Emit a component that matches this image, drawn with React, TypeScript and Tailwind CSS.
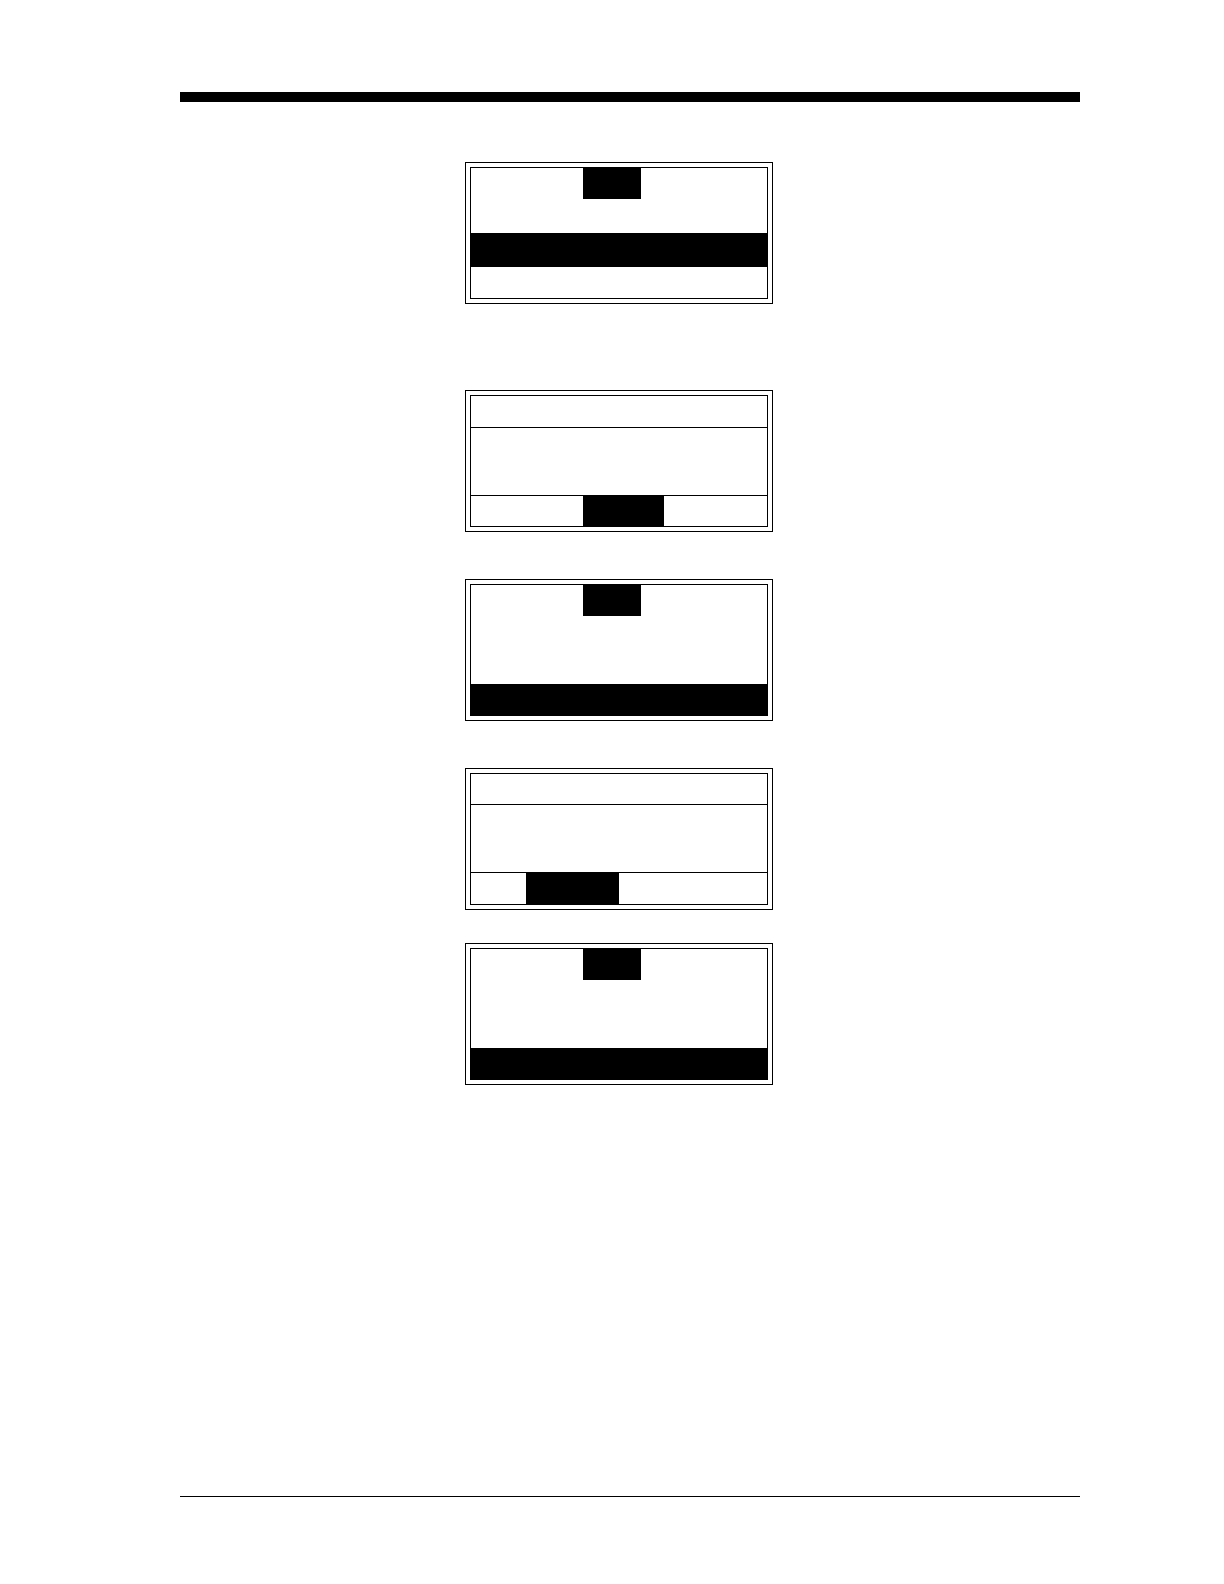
import type { ReactNode } from 'react';
import clsx from 'clsx';

interface PanelProps {
  className?: string;
  children: ReactNode;
}

// Double-ruled display frame
function Panel({ className, children }: PanelProps) {
  return (
    <section className={clsx('w-[308px] border border-black p-1', className)}>
      <div className="flex h-[132px] flex-col border border-black">{children}</div>
    </section>
  );
}

// Menu screen: a selected tab on top and one highlighted row below
function MenuPanel({ className, selected }: { className?: string; selected: number }) {
  return (
    <Panel className={className}>
      <div className="h-[31px] pl-28">
        <div className="h-full w-[58px] bg-black" />
      </div>
      <ul className="grid flex-1 grid-rows-[34px_34px_31px]">
        {[0, 1, 2].map((row) => (
          <li key={row} className={row === selected ? 'bg-black' : ''} />
        ))}
      </ul>
    </Panel>
  );
}

interface DialogPanelProps {
  className?: string;
  headerClass: string;
  footerClass: string;
  buttonClass: string;
}

// Dialog screen: title row, body, and a footer with the active choice filled in
function DialogPanel({ className, headerClass, footerClass, buttonClass }: DialogPanelProps) {
  return (
    <Panel className={className}>
      <header className={clsx('border-b border-black', headerClass)} />
      <div className="flex-1" />
      <footer className={clsx('border-t border-black', footerClass)}>
        <div className={clsx('h-full bg-black', buttonClass)} />
      </footer>
    </Panel>
  );
}

export default function App() {
  return (
    <div className="flex min-h-screen flex-col bg-white pt-[92px] pr-36 pb-[87px] pl-[180px]">
      <header className="h-2.5 bg-black" />

      <main className="flex flex-col pt-[60px] pb-10 pl-[285px]">
        <MenuPanel selected={1} />
        <DialogPanel
          className="mt-[86px]"
          headerClass="h-8"
          footerClass="h-[31px] pl-28"
          buttonClass="w-[81px]"
        />
        <MenuPanel className="mt-[47px]" selected={2} />
        <DialogPanel
          className="mt-[47px]"
          headerClass="h-[31px]"
          footerClass="h-8 pl-[55px]"
          buttonClass="w-[93px]"
        />
        <MenuPanel className="mt-[33px]" selected={2} />
      </main>

      <footer className="mt-auto border-t border-black" />
    </div>
  );
}
